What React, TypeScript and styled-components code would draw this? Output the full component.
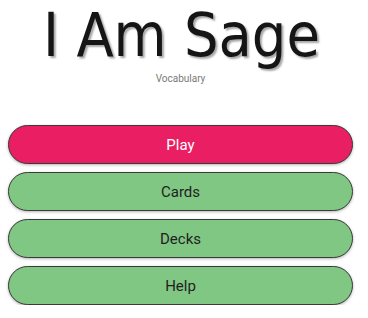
import React from "react";
import styled, { createGlobalStyle } from "styled-components";

const Global = createGlobalStyle`
  html, body { margin: 0; padding: 0; background: #fff; }
  body { font-family: Roboto, "Liberation Sans", sans-serif; }
`;

const Page = styled.div`
  width: 345px;
  margin-left: 8px;
  display: flex;
  flex-direction: column;
`;

const Header = styled.header`
  display: flex;
  flex-direction: column;
  align-items: center;
`;

const Title = styled.h1`
  margin: 0 0 0 2px;
  font-family: "DejaVu Sans Condensed", "DejaVu Sans", sans-serif;
  font-stretch: condensed;
  font-weight: normal;
  font-size: 60.5px;
  line-height: 70px;
  color: #151515;
  text-shadow: 2px 2px 2px rgba(0, 0, 0, 0.35);
  white-space: nowrap;
`;

const Subtitle = styled.div`
  margin-top: 3px;
  font-family: Roboto, sans-serif;
  font-size: 10px;
  line-height: 12px;
  color: #7a7a7a;
`;

const Menu = styled.nav`
  display: flex;
  flex-direction: column;
  gap: 8px;
  margin-top: 40px;
`;

const MenuButton = styled.button<{ $primary?: boolean }>`
  height: 39px;
  box-sizing: border-box;
  width: 100%;
  border: 1px solid #3a3a3a;
  border-radius: 20px;
  background: ${(p) => (p.$primary ? "#E91E63" : "#81C784")};
  color: ${(p) => (p.$primary ? "#ffffff" : "#1f1f1f")};
  font-family: Roboto, sans-serif;
  font-size: 15px;
  box-shadow: 0 1px 3px rgba(0, 0, 0, 0.3);
  padding: 0;
  cursor: pointer;
`;

export default function App() {
  return (
    <>
      <Global />
      <Page>
        <Header>
          <Title>I Am Sage</Title>
          <Subtitle>Vocabulary</Subtitle>
        </Header>
        <Menu>
          <MenuButton $primary>Play</MenuButton>
          <MenuButton>Cards</MenuButton>
          <MenuButton>Decks</MenuButton>
          <MenuButton>Help</MenuButton>
        </Menu>
      </Page>
    </>
  );
}
